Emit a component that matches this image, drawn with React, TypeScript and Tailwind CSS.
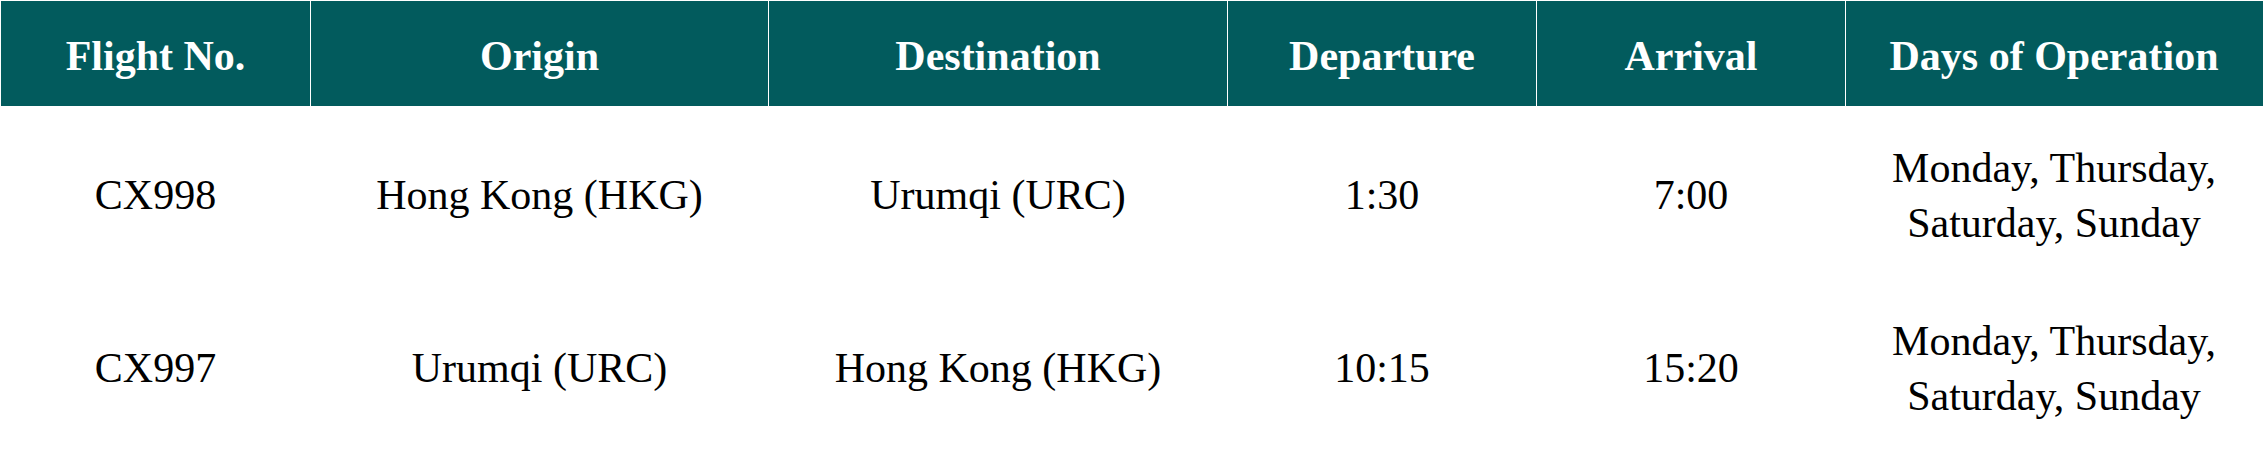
const columns = [
  'Flight No.',
  'Origin',
  'Destination',
  'Departure',
  'Arrival',
  'Days of Operation',
];

const flights = [
  {
    no: 'CX998',
    origin: 'Hong Kong (HKG)',
    destination: 'Urumqi (URC)',
    departure: '1:30',
    arrival: '7:00',
    days: ['Monday, Thursday,', 'Saturday, Sunday'],
  },
  {
    no: 'CX997',
    origin: 'Urumqi (URC)',
    destination: 'Hong Kong (HKG)',
    departure: '10:15',
    arrival: '15:20',
    days: ['Monday, Thursday,', 'Saturday, Sunday'],
  },
];

// widths include the 1px white divider on the left of every cell but the first
const gridCols = 'grid grid-cols-[309px_458px_459px_309px_309px_417px]';

const Cell = ({ children }: { children: React.ReactNode }) => (
  <div className="flex h-[173px] flex-col items-center justify-center pt-[6px] text-center">
    {children}
  </div>
);

const App = () => {
  return (
    <div
      className="h-[453px] w-[2263px] bg-white pl-px pt-px text-[42px] leading-[55px] text-black"
      style={{ fontFamily: '"Liberation Serif", "Times New Roman", serif' }}>
      <div className={`${gridCols} h-[105px] bg-[#025b5d] font-bold text-white`}>
        {columns.map((col, i) => (
          <div
            key={col}
            className={`flex items-center justify-center pt-[6px] ${
              i > 0 ? 'border-l border-white' : ''
            }`}>
            {col}
          </div>
        ))}
      </div>
      {flights.map((f) => (
        <div key={f.no} className={gridCols}>
          <Cell>{f.no}</Cell>
          <div className="pl-px">
            <Cell>{f.origin}</Cell>
          </div>
          <div className="pl-px">
            <Cell>{f.destination}</Cell>
          </div>
          <div className="pl-px">
            <Cell>{f.departure}</Cell>
          </div>
          <div className="pl-px">
            <Cell>{f.arrival}</Cell>
          </div>
          <div className="pl-px">
            <Cell>
              {f.days.map((d) => (
                <span key={d}>{d}</span>
              ))}
            </Cell>
          </div>
        </div>
      ))}
    </div>
  );
};

export default App;
